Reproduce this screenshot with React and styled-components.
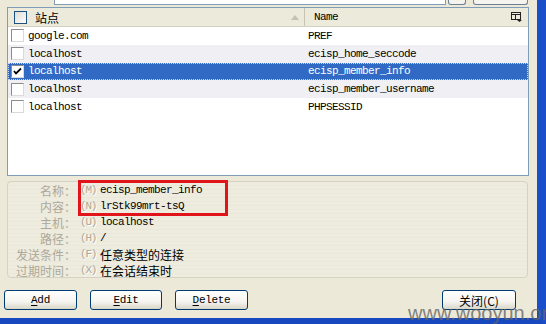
import React from "react";
import styled, { createGlobalStyle } from "styled-components";

const Global = createGlobalStyle`
  html, body {
    margin: 0;
    padding: 0;
    background: #ece9d8;
    overflow: hidden;
  }
`;

const mono = `"Liberation Mono", "DejaVu Sans Mono", "Noto Sans CJK SC", monospace`;
const cjk = `"Noto Sans CJK SC", "Liberation Sans", sans-serif`;

const Window = styled.div`
  position: relative;
  box-sizing: border-box;
  width: 546px;
  height: 324px;
  background: #ece9d8;
  border-right: 9px solid #1a4fc9;
  border-bottom: 6px solid #1848c0;
  display: flex;
  flex-direction: column;
`;

const TopStrip = styled.div`
  display: flex;
  height: 5px;
  padding-left: 54px;
  flex-shrink: 0;
`;

const SearchField = styled.div`
  box-sizing: border-box;
  width: 392px;
  height: 5px;
  background: #fff;
  border: 1px solid #7f9db9;
  border-top: none;
`;

const StubButton = styled.div`
  box-sizing: border-box;
  width: ${(p) => p.$w}px;
  margin-left: ${(p) => p.$gap}px;
  height: 5px;
  background: #f4f3ee;
  border: 1px solid #6d7f94;
  border-top: none;
  border-radius: 0 0 3px 3px;
`;

const ListBox = styled.div`
  box-sizing: border-box;
  margin: 2px 0 0 7px;
  width: 522px;
  height: 169px;
  background: #fff;
  border: 1px solid #7f9db9;
  flex-shrink: 0;
`;

const Header = styled.div`
  display: flex;
  height: 18px;
  background: #ebeadb;
  border-bottom: 1px solid #d6d2c2;
  box-shadow: 0 1px 0 #e2dfd0;
`;

const HeadCell = styled.div`
  position: relative;
  box-sizing: border-box;
  display: flex;
  align-items: center;
  width: ${(p) => (p.$w ? `${p.$w}px` : "auto")};
  flex: ${(p) => (p.$w ? "none" : "1")};
  padding-left: ${(p) => p.$pad}px;
  border-right: ${(p) => (p.$sep ? "1px solid #c7c5b2" : "none")};
  font-family: ${mono};
  font-size: 11px;
  letter-spacing: -0.6px;
  color: #000;
`;

const HeadLabel = styled.span`
  font-family: ${cjk};
  font-size: 12px;
  letter-spacing: 0;
  margin-left: 8px;
`;

const SortArrow = styled.span`
  margin-left: auto;
  margin-right: 5px;
  width: 0;
  height: 0;
  border-left: 4px solid transparent;
  border-right: 4px solid transparent;
  border-bottom: 5px solid #c5c2b2;
`;

const Picker = styled.div`
  display: flex;
  align-items: center;
  justify-content: center;
  width: 14px;
  margin-right: 5px;
`;

const Row = styled.div`
  box-sizing: border-box;
  display: flex;
  align-items: center;
  height: 17.75px;
  background: ${(p) => (p.$selected ? "#316ac5" : p.$alt ? "#efeff4" : "#fff")};
  color: ${(p) => (p.$selected ? "#fff" : "#000")};
  outline: ${(p) => (p.$selected ? "1px dotted #c9d8f2" : "none")};
  outline-offset: -1px;
  font-family: ${mono};
  font-size: 11px;
  letter-spacing: -0.6px;
`;

const SiteCell = styled.div`
  display: flex;
  align-items: center;
  width: 297px;
  padding-left: 3px;
  box-sizing: border-box;
`;

const NameCell = styled.div`
  padding-left: 3px;
`;

const Check = styled.span`
  box-sizing: border-box;
  display: inline-flex;
  align-items: center;
  justify-content: center;
  width: 13px;
  height: 13px;
  margin-right: 4px;
  background: #fff;
  border: 1px solid;
  border-color: #8c8c8c #dadada #dadada #8c8c8c;
`;

const HeadCheck = styled.span`
  box-sizing: border-box;
  display: inline-block;
  width: 13px;
  height: 13px;
  margin-left: 3px;
  border: 1px solid #1c5180;
  background: linear-gradient(135deg, #dcdcd7, #fdfdfb);
`;

const Group = styled.div`
  position: relative;
  box-sizing: border-box;
  margin: 5px 0 0 7px;
  width: 521px;
  height: 97px;
  border: 1px solid #d5d2c1;
  border-radius: 4px;
  background: repeating-linear-gradient(
    180deg,
    #eeecdf 0px,
    #eeecdf 3px,
    #ebe8da 3px,
    #ebe8da 4px
  );
  flex-shrink: 0;
`;

const Field = styled.div`
  display: flex;
  align-items: center;
  height: 16px;
`;

const FieldLabel = styled.span`
  width: 68px;
  text-align: right;
  font-family: ${cjk};
  font-size: 12px;
  color: #aca899;
  white-space: nowrap;
`;

const Accel = styled.span`
  width: 20px;
  margin-left: 4px;
  font-family: ${mono};
  font-size: 11px;
  letter-spacing: -1.2px;
  color: #aca899;
  text-shadow: 1px 1px 0 #fff;
`;

const FieldValue = styled.span`
  font-family: ${(p) => (p.$cjk ? cjk : mono)};
  font-size: ${(p) => (p.$cjk ? 12 : 11)}px;
  letter-spacing: ${(p) => (p.$cjk ? 0 : -0.6)}px;
  color: #000;
`;

const Highlight = styled.div`
  position: absolute;
  left: 70px;
  top: -2px;
  width: 150px;
  height: 36px;
  box-sizing: border-box;
  border: 3px solid #e1141c;
`;

const ButtonRow = styled.div`
  display: flex;
  margin-top: 12px;
  padding-left: 4px;
  gap: 13px;
`;

const Button = styled.button`
  box-sizing: border-box;
  width: ${(p) => p.$w}px;
  height: 20px;
  margin-left: ${(p) => (p.$right ? "auto" : "0")};
  margin-right: ${(p) => (p.$right ? "21px" : "0")};
  padding: 0;
  border: 1px solid #003c74;
  border-radius: 3px;
  background: linear-gradient(180deg, #ffffff 0%, #f5f4ef 60%, #d9d6c8 100%);
  font-family: ${(p) => (p.$cjk ? cjk : mono)};
  font-size: ${(p) => (p.$cjk ? 12 : 11)}px;
  letter-spacing: ${(p) => (p.$cjk ? 0 : -0.3)}px;
  color: #000;
  u {
    text-underline-offset: 2px;
  }
`;

const Watermark = styled.div`
  position: absolute;
  left: 408px;
  bottom: -5px;
  line-height: 20px;
  white-space: nowrap;
  font-family: "Liberation Sans", Arial, sans-serif;
  font-size: 20px;
  color: rgba(100, 100, 100, 0.8);
  pointer-events: none;
`;

const rows = [
  { site: "google.com", name: "PREF" },
  { site: "localhost", name: "ecisp_home_seccode" },
  { site: "localhost", name: "ecisp_member_info", selected: true },
  { site: "localhost", name: "ecisp_member_username" },
  { site: "localhost", name: "PHPSESSID" },
];

const fields = [
  { label: "名称：", key: "(M)", value: "ecisp_member_info" },
  { label: "内容：", key: "(N)", value: "lrStk99mrt-tsQ" },
  { label: "主机：", key: "(U)", value: "localhost" },
  { label: "路径：", key: "(H)", value: "/" },
  { label: "发送条件：", key: "(F)", value: "任意类型的连接", cjk: true },
  { label: "过期时间：", key: "(X)", value: "在会话结束时", cjk: true },
];

function PickerIcon() {
  return (
    <svg width="11" height="10" viewBox="0 0 11 10">
      <rect x="0.5" y="0.5" width="9" height="7" fill="none" stroke="#222" />
      <line x1="0" y1="2.5" x2="10" y2="2.5" stroke="#222" />
      <line x1="4.5" y1="2" x2="4.5" y2="8" stroke="#222" />
      <polygon points="6,8 11,8 8.5,10" fill="#222" />
    </svg>
  );
}

function Tick() {
  return (
    <svg width="9" height="9" viewBox="0 0 9 9">
      <path d="M1 4 L3 6.5 L8 1.5" fill="none" stroke="#000" strokeWidth="1.8" />
    </svg>
  );
}

export default function App() {
  return (
    <>
      <Global />
      <Window>
        <TopStrip>
          <SearchField />
          <StubButton $w={18} $gap={2} />
          <StubButton $w={55} $gap={7} />
        </TopStrip>
        <ListBox>
          <Header>
            <HeadCell $w={297} $pad={3} $sep>
              <HeadCheck />
              <HeadLabel>站点</HeadLabel>
              <SortArrow />
            </HeadCell>
            <HeadCell $pad={9}>Name</HeadCell>
            <Picker>
              <PickerIcon />
            </Picker>
          </Header>
          {rows.map((r, i) => (
            <Row key={i} $alt={i % 2 === 1} $selected={r.selected}>
              <SiteCell>
                <Check>{r.selected && <Tick />}</Check>
                {r.site}
              </SiteCell>
              <NameCell>{r.name}</NameCell>
            </Row>
          ))}
        </ListBox>
        <Group>
          {fields.map((f) => (
            <Field key={f.key}>
              <FieldLabel>{f.label}</FieldLabel>
              <Accel>{f.key}</Accel>
              <FieldValue $cjk={f.cjk}>{f.value}</FieldValue>
            </Field>
          ))}
          <Highlight />
        </Group>
        <ButtonRow>
          <Button $w={73}>
            <u>A</u>dd
          </Button>
          <Button $w={72}>
            <u>E</u>dit
          </Button>
          <Button $w={73}>
            <u>D</u>elete
          </Button>
          <Button $w={74} $right $cjk>
            关闭(C)
          </Button>
        </ButtonRow>
        <Watermark>www.wooyun.org</Watermark>
      </Window>
    </>
  );
}
